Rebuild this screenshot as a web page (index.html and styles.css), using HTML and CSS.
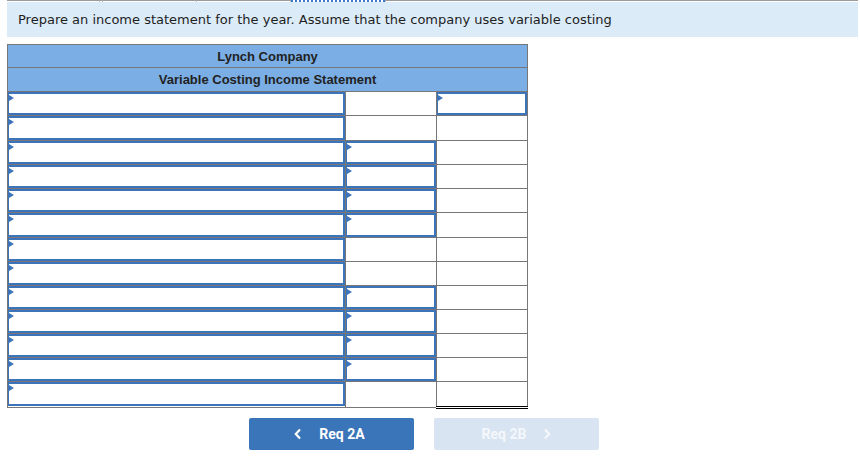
FILE: index.html
```html
<!DOCTYPE html>
<html>
<head>
<meta charset="utf-8">
<link rel="stylesheet" href="styles.css">
</head>
<body>
<div class="tabs">
  <div class="tab t1"></div>
  <div class="tab t2"></div>
  <div class="tab t3"></div>
  <div class="tab t3"></div>
  <div class="tab t4 active"></div>
  <div class="tab t5"></div>
</div>
<div class="page">
  <div class="banner">Prepare an income statement for the year. Assume that the company uses variable costing</div>
  <table class="stmt">
    <colgroup><col class="c1"><col class="c2"><col class="c3"></colgroup>
    <tr class="head"><th colspan="3">Lynch Company</th></tr>
    <tr class="head"><th colspan="3">Variable Costing Income Statement</th></tr>
    <tr><td><div class="inp"><i class="arr"></i></div></td><td></td><td><div class="inp"><i class="arr"></i></div></td></tr>
    <tr class="tall"><td><div class="inp"><i class="arr"></i></div></td><td></td><td></td></tr>
    <tr><td><div class="inp"><i class="arr"></i></div></td><td><div class="inp"><i class="arr"></i></div></td><td></td></tr>
    <tr><td><div class="inp"><i class="arr"></i></div></td><td><div class="inp"><i class="arr"></i></div></td><td></td></tr>
    <tr><td><div class="inp"><i class="arr"></i></div></td><td><div class="inp"><i class="arr"></i></div></td><td></td></tr>
    <tr class="tall"><td><div class="inp"><i class="arr"></i></div></td><td><div class="inp"><i class="arr"></i></div></td><td></td></tr>
    <tr><td><div class="inp"><i class="arr"></i></div></td><td class="top"></td><td class="top"></td></tr>
    <tr><td><div class="inp"><i class="arr"></i></div></td><td></td><td></td></tr>
    <tr><td><div class="inp"><i class="arr"></i></div></td><td><div class="inp"><i class="arr"></i></div></td><td></td></tr>
    <tr><td><div class="inp"><i class="arr"></i></div></td><td><div class="inp"><i class="arr"></i></div></td><td></td></tr>
    <tr><td><div class="inp"><i class="arr"></i></div></td><td><div class="inp"><i class="arr"></i></div></td><td></td></tr>
    <tr><td><div class="inp"><i class="arr"></i></div></td><td><div class="inp"><i class="arr"></i></div></td><td></td></tr>
    <tr class="tall"><td><div class="inp"><i class="arr"></i></div></td><td class="top"></td><td class="top dbl"></td></tr>
  </table>
  <div class="nav">
    <button class="btn prev"><svg width="8" height="12" viewBox="0 0 8 12"><path d="M6 1.5 L1.8 6 L6 10.5" fill="none" stroke="#fff" stroke-width="2.2"/></svg><span>Req 2A</span></button>
    <button class="btn next"><span>Req 2B</span><svg width="8" height="12" viewBox="0 0 8 12"><path d="M2 1.5 L6.2 6 L2 10.5" fill="none" stroke="#f4f7fb" stroke-width="2.2"/></svg></button>
  </div>
</div>
</body>
</html>
```

FILE: styles.css
```css
html, body { margin: 0; padding: 0; background: #fff; }
body { font-family: "DejaVu Sans", Verdana, sans-serif; }

.tabs { display: flex; height: 2px; padding: 0 2px 0 7px; }
.tab { border-top: 1px solid #9a9a9a; height: 1px; }
.t1 { width: 92px; border-right: 1px solid #bbb; }
.t2 { width: 2px; border-right: 1px solid #bbb; }
.t3 { width: 93px; border-right: 1px solid #bbb; }
.t4 { width: 94px; }
.t5 { flex: 1; border-left: 1px solid #bbb; }
.tab.active { border-top: 0; border-bottom: 2px dotted #3b78c8; height: 0; }

.page { padding: 0 2px 0 7px; }

.banner {
  background: #dbebf8;
  height: 35px;
  line-height: 35px;
  padding-left: 11px;
  font-size: 13px;
  color: #1e1e1e;
}

.stmt {
  margin-top: 7px;
  border-collapse: collapse;
  width: 521px;
  table-layout: fixed;
  font-family: "Liberation Sans", Arial, sans-serif;
}
.c1 { width: 338px; }
.c2 { width: 91px; }
.c3 { width: 91px; }

.stmt th {
  background: #7aaee4;
  border: 1px solid #777;
  height: 22px;
  padding: 0;
  font-size: 13px;
  font-weight: bold;
  color: #222;
  text-align: center;
}
.stmt tr.head:nth-child(2) th { height: 23px; }
.stmt td {
  border: 1px solid #777;
  height: 23px;
  padding: 0;
  background: #fff;
  vertical-align: top;
}
.stmt tr.tall td { height: 24px; }
.stmt td.top { border-top: 1px solid #000; }
.stmt td.dbl { border-bottom: 3px double #000; }

.inp {
  position: relative;
  box-sizing: border-box;
  height: 23px;
  border: 2px solid #3b74ba;
  border-left-width: 1px;
}
.stmt tr.tall td .inp { height: 24px; }
.arr {
  position: absolute;
  left: 0;
  top: 1px;
  width: 0;
  height: 0;
  border-top: 3.5px solid transparent;
  border-bottom: 3.5px solid transparent;
  border-left: 5px solid #3b74ba;
}

.nav {
  display: flex;
  gap: 20px;
  margin-top: 9px;
  padding-left: 242px;
}
.btn {
  width: 165px;
  height: 32px;
  border: 0;
  border-radius: 2px;
  display: flex;
  align-items: center;
  justify-content: center;
  gap: 17px;
  font-family: "Roboto", "Liberation Sans", Arial, sans-serif;
  font-weight: bold;
  font-size: 14px;
  padding: 0;
}
.prev { background: #3a75ba; color: #fff; padding-right: 4px; }
.next { background: #d8e4f1; color: #f4f7fb; }
```
